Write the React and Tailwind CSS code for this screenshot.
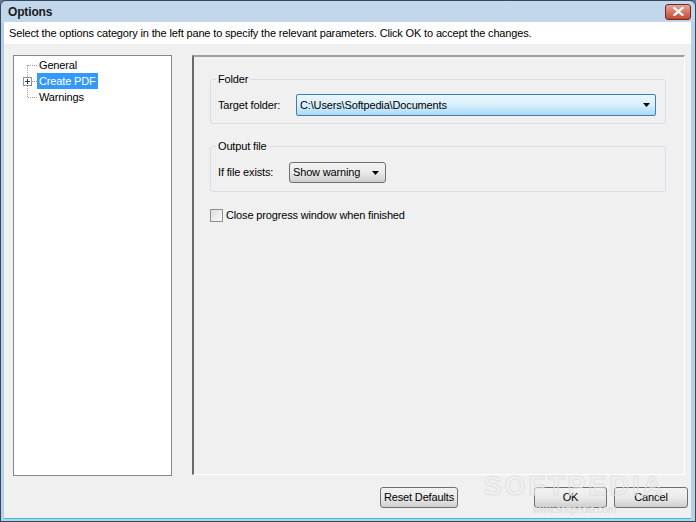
import React from "react";

const font = { fontFamily: '"Liberation Sans", "DejaVu Sans", sans-serif', letterSpacing: "-0.15px" };

const btn = "h-[21px] rounded-[3px] border border-[#707070] bg-gradient-to-b from-[#f2f2f2] via-[#ebebeb] to-[#cfcfcf]";

function TreeItem({ label, selected, plus }) {
  return (
    <div className="relative flex h-4 items-center pl-[23px]">
      <span className="absolute left-[14px] top-[8px] w-[9px] border-t border-dotted border-[#a0a0a0]" />
      {plus && (
        <span className="absolute left-[9px] top-[4px] flex h-[9px] w-[9px] items-center justify-center border border-[#919191] bg-white">
          <svg width="7" height="7" viewBox="0 0 7 7">
            <path d="M1 3.5h5M3.5 1v5" stroke="#1c3c78" strokeWidth="1" />
          </svg>
        </span>
      )}
      <span className={selected ? "bg-[#3399ff] px-[2px] text-white" : "px-[2px] text-black"}>{label}</span>
    </div>
  );
}

function Group({ title, className, children }) {
  return (
    <div className={`relative rounded-[3px] border border-[#d5dfe5] pl-[7px] pr-[9px] ${className}`}>
      <span className="absolute -top-[8px] left-[5px] bg-[#f0f0f0] px-[2px] leading-[14px]">{title}</span>
      {children}
    </div>
  );
}

export default function App() {
  return (
    <div className="h-[522px] w-[696px] overflow-hidden bg-[#5d7797] text-[11px] text-black" style={font}>
      <div className="flex h-full flex-col rounded-t-[6px] border border-[#39495c] bg-gradient-to-b from-[#c3d7ec] to-[#aac6e3]">
        {/* title bar */}
        <div className="flex h-[21px] shrink-0 items-center justify-between pl-[7px] pr-[4px]">
          <span className="text-[12px] font-bold text-[#1a1a1a]">Options</span>
          <button className="flex h-[16px] w-[26px] items-center justify-center rounded-[3px] border border-[#6d2a24] bg-gradient-to-b from-[#e6a596] to-[#c4452f]">
            <svg width="11" height="9" viewBox="0 0 11 9">
              <path d="M1.5 1l8 7M9.5 1l-8 7" stroke="#fff" strokeWidth="2.2" strokeLinecap="square" />
            </svg>
          </button>
        </div>
        <div className="flex min-h-0 flex-1 flex-col border-b-[2px] border-l-[3px] border-r-[4px] border-[#b6d0e8]">
          <div className="flex flex-1 flex-col border-b border-[#2bc3e3]">
            {/* description */}
            <div className="flex h-[22px] shrink-0 items-center bg-white pl-[5px]">
              Select the options category in the left pane to specify the relevant parameters. Click OK to accept the changes.
            </div>
            {/* body */}
            <div className="relative flex flex-1 flex-col bg-[#f0f0f0]">
              <div className="flex flex-1 pl-[9px] pr-[6px] pt-[11px]">
                {/* tree */}
                <div className="h-[421px] w-[159px] shrink-0 border border-[#828790] bg-white pt-[1px]">
                  <div className="relative">
                    <span className="absolute left-[13px] top-[8px] h-[32px] border-l border-dotted border-[#a0a0a0]" />
                    <TreeItem label="General" />
                    <TreeItem label="Create PDF" selected plus />
                    <TreeItem label="Warnings" />
                  </div>
                </div>
                {/* right panel */}
                <div className="ml-[20px] flex h-[420px] flex-1 flex-col border-b border-l-[2px] border-r border-t-[2px] border-b-white border-l-[#696969] border-r-white border-t-[#a0a0a0] pl-[16px] pr-[18px] pt-[22px]">
                  <Group title="Folder" className="h-[45px] pt-[14px]">
                    <div className="flex items-center">
                      <span className="w-[78px]">Target folder:</span>
                      <div className="flex h-[22px] flex-1 items-center justify-between rounded-[2px] border border-[#3c7fb1] bg-gradient-to-b from-[#eaf6fd] via-[#d9f0fc] to-[#a7d9f5] pl-[3px] pr-[5px]">
                        <span>C:\Users\Softpedia\Documents</span>
                        <svg width="7" height="4" viewBox="0 0 7 4"><path d="M0 0h7L3.5 4z" fill="#000" /></svg>
                      </div>
                    </div>
                  </Group>
                  <Group title="Output file" className="mt-[22px] h-[46px] pt-[15px]">
                    <div className="flex items-center">
                      <span className="w-[71px]">If file exists:</span>
                      <div className="flex h-[21px] w-[97px] items-center justify-between rounded-[3px] border border-[#707070] bg-gradient-to-b from-[#f2f2f2] via-[#ebebeb] to-[#cfcfcf] pl-[3px] pr-[6px]">
                        <span>Show warning</span>
                        <svg width="7" height="4" viewBox="0 0 7 4"><path d="M0 0h7L3.5 4z" fill="#000" /></svg>
                      </div>
                    </div>
                  </Group>
                  <label className="mt-[15px] flex items-center">
                    <span className="h-[13px] w-[13px] border border-[#8f8f8f] bg-gradient-to-br from-[#dcdcdc] to-[#fbfbfb]" />
                    <span className="ml-[3px]">Close progress window when finished</span>
                  </label>
                </div>
              </div>
              {/* buttons */}
              <div className="flex h-[42px] shrink-0 items-start pt-[11px]">
                <button className={`ml-[376px] w-[78px] ${btn}`}>Reset Defaults</button>
                <button className={`ml-[76px] w-[73px] ${btn}`}>OK</button>
                <button className={`ml-[7px] w-[74px] ${btn}`}>Cancel</button>
              </div>
              {/* watermark */}
              <div className="pointer-events-none absolute bottom-[3px] right-[26px] flex flex-col items-center">
                <span className="text-[27px] font-bold leading-none tracking-[3px]" style={{ WebkitTextStroke: "1px #e2e2e2", color: "transparent" }}>SOFTPEDIA</span>
                <span className="mt-[5px] text-[10px] leading-none text-[#dadada]">www.softpedia.com</span>
              </div>
            </div>
          </div>
        </div>
      </div>
    </div>
  );
}
